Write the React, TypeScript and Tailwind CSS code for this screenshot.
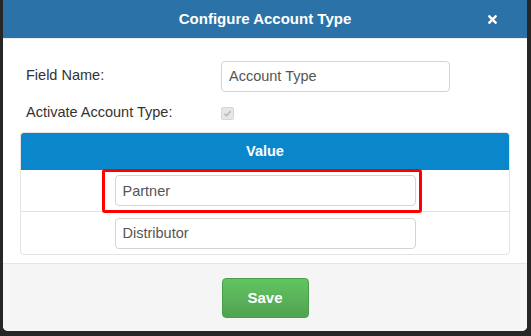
import { FaTimes } from 'react-icons/fa'

function CheckBox() {
    return (
        <span className="flex h-[13px] w-[13px] items-center justify-center rounded-[2px] border border-[#d6d6d6] bg-[#e6e6e6]">
            <svg viewBox="0 0 12 12" className="h-[9px] w-[9px]">
                <path d="M2 6.5 L4.8 9 L10 3" fill="none" stroke="#b5b5b5" strokeWidth="2" />
            </svg>
        </span>
    )
}

function ValueRow({ value, highlight, last }: { value: string; highlight?: boolean; last?: boolean }) {
    return (
        <div className={`flex h-[42px] items-center justify-center ${last ? '' : 'border-b border-[#e3e3e3]'}`}>
            <div className="relative">
                {highlight && (
                    <div className="absolute -left-[13px] -right-[6px] -top-[6px] -bottom-[7px] rounded-[3px] border-[3px] border-[#ff0000]" />
                )}
                <input
                    readOnly
                    value={value}
                    className="relative block h-[31px] w-[301px] rounded-[4px] border border-[#d4d4d4] bg-white px-[7px] text-[14.5px] text-[#555] outline-none"
                />
            </div>
        </div>
    )
}

export default function App() {
    return (
        <div className="h-[336px] w-[531px] overflow-hidden bg-[#262626] pl-[3px] pr-[4px] font-['Liberation_Sans',Arial,sans-serif]">
            <div className="flex h-[331px] flex-col overflow-hidden rounded-b-[5px] bg-white">
                <div className="relative flex h-[39px] shrink-0 items-center justify-center bg-[#2a72a7] border-b border-[#e8eef3]">
                    <h2 className="text-[15px] font-bold text-white">Configure Account Type</h2>
                    <FaTimes className="absolute right-[28px] top-[13px] h-[13px] w-[13px] text-white" />
                </div>

                <div className="flex-1 px-[17px] pt-[22px] pb-[8px]">
                    <div className="flex h-[30px] items-center pl-[6px]">
                        <label className="w-[195px] text-[14.5px] text-[#333]">Field Name:</label>
                        <input
                            readOnly
                            value="Account Type"
                            className="h-[31px] w-[229px] rounded-[4px] border border-[#d4d4d4] px-[7px] text-[14.5px] text-[#555] outline-none"
                        />
                    </div>
                    <div className="mt-[10px] flex h-[24px] items-center pl-[6px]">
                        <label className="w-[195px] text-[14.5px] text-[#333]">Activate Account Type:</label>
                        <CheckBox />
                    </div>

                    <div className="mt-[7px] overflow-hidden rounded-[4px] border border-[#e3e3e3]">
                        <div className="flex h-[37px] items-center justify-center bg-[#0a87cb] text-[14.5px] font-bold text-white">
                            Value
                        </div>
                        <ValueRow value="Partner" highlight />
                        <ValueRow value="Distributor" last />
                    </div>
                </div>

                <div className="flex h-[69px] shrink-0 items-center justify-center border-t border-[#e5e5e5] bg-[#f5f5f5]">
                    <button className="h-[40px] w-[87px] rounded-[4px] border border-[#4a9e4a] bg-gradient-to-b from-[#62c462] to-[#51a351] text-[15px] font-bold text-white">
                        Save
                    </button>
                </div>
            </div>
        </div>
    )
}
